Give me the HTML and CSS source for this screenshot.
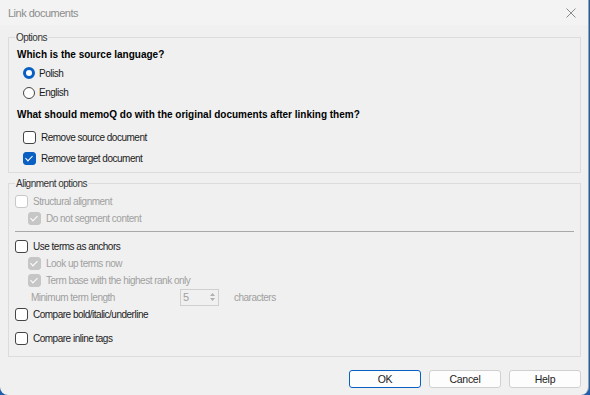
FILE: index.html
```html
<!DOCTYPE html>
<html lang="en">
<head>
  <meta charset="UTF-8">
  <title>Link documents</title>
  <link rel="stylesheet" href="styles.css">
</head>
<body>
  <div class="window">
    <div class="titlebar">
      <span class="title">Link documents</span>
      <svg class="close" width="10" height="10" viewBox="0 0 10 10">
        <path d="M0.5 0.5 L9.5 9.5 M9.5 0.5 L0.5 9.5" stroke="#8a8a8a" stroke-width="1" fill="none"/>
      </svg>
    </div>

    <div class="content">
      <fieldset class="group group-options">
        <legend>Options</legend>
        <div class="heading">Which is the source language?</div>
        <label class="row row-radio"><span class="radio checked"></span>Polish</label>
        <label class="row row-radio"><span class="radio"></span>English</label>
        <div class="heading heading-2">What should memoQ do with the original documents after linking them?</div>
        <label class="row row-doc"><span class="check"></span>Remove source document</label>
        <label class="row row-doc"><span class="check checked"></span>Remove target document</label>
      </fieldset>

      <fieldset class="group group-align">
        <legend>Alignment options</legend>
        <label class="row row-first disabled"><span class="check"></span>Structural alignment</label>
        <label class="row sub disabled"><span class="check checked"></span>Do not segment content</label>
        <div class="separator"></div>
        <label class="row"><span class="check"></span>Use terms as anchors</label>
        <label class="row sub disabled"><span class="check checked"></span>Look up terms now</label>
        <label class="row sub disabled"><span class="check checked"></span>Term base with the highest rank only</label>
        <div class="row row-spin disabled">
          <span class="spin-label">Minimum term length</span>
          <span class="spin">
            <span class="spin-value">5</span>
            <span class="spin-arrows">
              <svg width="7" height="12" viewBox="0 0 7 12">
                <path d="M1 5 L3.5 2 L6 5 Z M1 7 L3.5 10 L6 7 Z" fill="#b0b0b0"/>
              </svg>
            </span>
          </span>
          <span class="spin-unit">characters</span>
        </div>
        <label class="row"><span class="check"></span>Compare bold/italic/underline</label>
        <label class="row row-last"><span class="check"></span>Compare inline tags</label>
      </fieldset>

      <div class="buttons">
        <button class="btn btn-default">OK</button>
        <button class="btn">Cancel</button>
        <button class="btn">Help</button>
      </div>
    </div>
  </div>
</body>
</html>
```

FILE: styles.css
```css
* {
  box-sizing: border-box;
}
body {
  margin: 0;
  background-color: #1d5fae;
  font-family: "Liberation Sans", Arial, sans-serif;
  font-size: 10px;
  letter-spacing: -0.5px;
  color: #1b1b1b;
}
.window {
  width: 589px;
  height: 395px;
  background-color: #f0f0f0;
  border-right: 1px solid #a0a0a0;
  border-radius: 0 0 8px 8px;
  display: flex;
  flex-direction: column;
  overflow: hidden;
}
.titlebar {
  height: 25px;
  background-color: #f3f3f3;
  display: flex;
  align-items: center;
  justify-content: space-between;
  padding: 0 12px 0 8px;
  color: #8c8c8c;
  font-size: 11px;
}
.content {
  flex: 1;
  padding: 6px 7px 0 8px;
  display: flex;
  flex-direction: column;
}
.group {
  margin: 0;
  border: 1px solid #dcdcdc;
  padding: 0 6px;
  min-width: 0;
}
.group legend {
  padding: 0 1px;
  margin-left: 0;
  color: #333;
  line-height: 13px;
}
.group-options {
  height: 142px;
}
.group-align {
  margin-top: 4px;
  height: 180px;
}
.heading {
  font-weight: bold;
  letter-spacing: 0;
  color: #000;
  height: 16px;
  line-height: 16px;
  margin: 3px 0 0 2px;
}
.heading-2 {
  margin-top: 5px;
  margin-bottom: 3px;
}
.row {
  display: flex;
  align-items: center;
  height: 17px;
  padding-top: 1px;
}
.row-radio {
  height: 19.5px;
  padding-left: 8px;
}
.row-doc {
  height: 21px;
  padding-left: 8px;
}
.row.sub {
  padding-left: 13px;
}
.row-first {
  margin-top: 2px;
}
.row-last {
  margin-top: 7px;
}
.disabled {
  color: #a0a0a0;
}
.radio {
  width: 12px;
  height: 12px;
  border: 1px solid #444;
  border-radius: 50%;
  background: #fff;
  margin-right: 4px;
  flex: none;
}
.radio.checked {
  border: 3px solid #0a5fc2;
}
.check {
  width: 13px;
  height: 13px;
  border: 1px solid #444;
  border-radius: 3px;
  background: #fff;
  margin-right: 5px;
  flex: none;
  position: relative;
}
.check.checked {
  background: #0a5fc2;
  border-color: #0a5fc2;
}
.check.checked::after {
  content: "";
  position: absolute;
  left: 3px;
  top: 1px;
  width: 3px;
  height: 6px;
  border: solid #fff;
  border-width: 0 1px 1px 0;
  transform: rotate(45deg);
}
.disabled .check {
  border-color: #c8c8c8;
}
.disabled .check.checked {
  background: #c6c6c6;
  border-color: #c6c6c6;
}
.separator {
  height: 1px;
  background-color: #a8a8a8;
  margin: 5px 0 5px 0;
}
.row-spin {
  height: 17px;
  padding-left: 16px;
}
.spin-label {
  width: 149px;
}
.spin {
  width: 39px;
  height: 17px;
  border: 1px solid #cfcfcf;
  display: flex;
  align-items: center;
  justify-content: space-between;
  padding-left: 2px;
  margin-right: 15px;
  font-size: 11px;
}
.spin-arrows {
  display: flex;
  align-items: center;
  padding-right: 2px;
}
.buttons {
  display: flex;
  justify-content: flex-end;
  gap: 8px;
  margin-top: 13px;
}
.btn {
  width: 72px;
  height: 18px;
  font-family: "Liberation Sans", Arial, sans-serif;
  font-size: 10.5px;
  letter-spacing: -0.3px;
  color: #1b1b1b;
  background: #fdfdfd;
  border: 1px solid #d0d0d0;
  border-radius: 3px;
  padding: 0;
}
.btn-default {
  border-color: #0a5fc2;
}
```
